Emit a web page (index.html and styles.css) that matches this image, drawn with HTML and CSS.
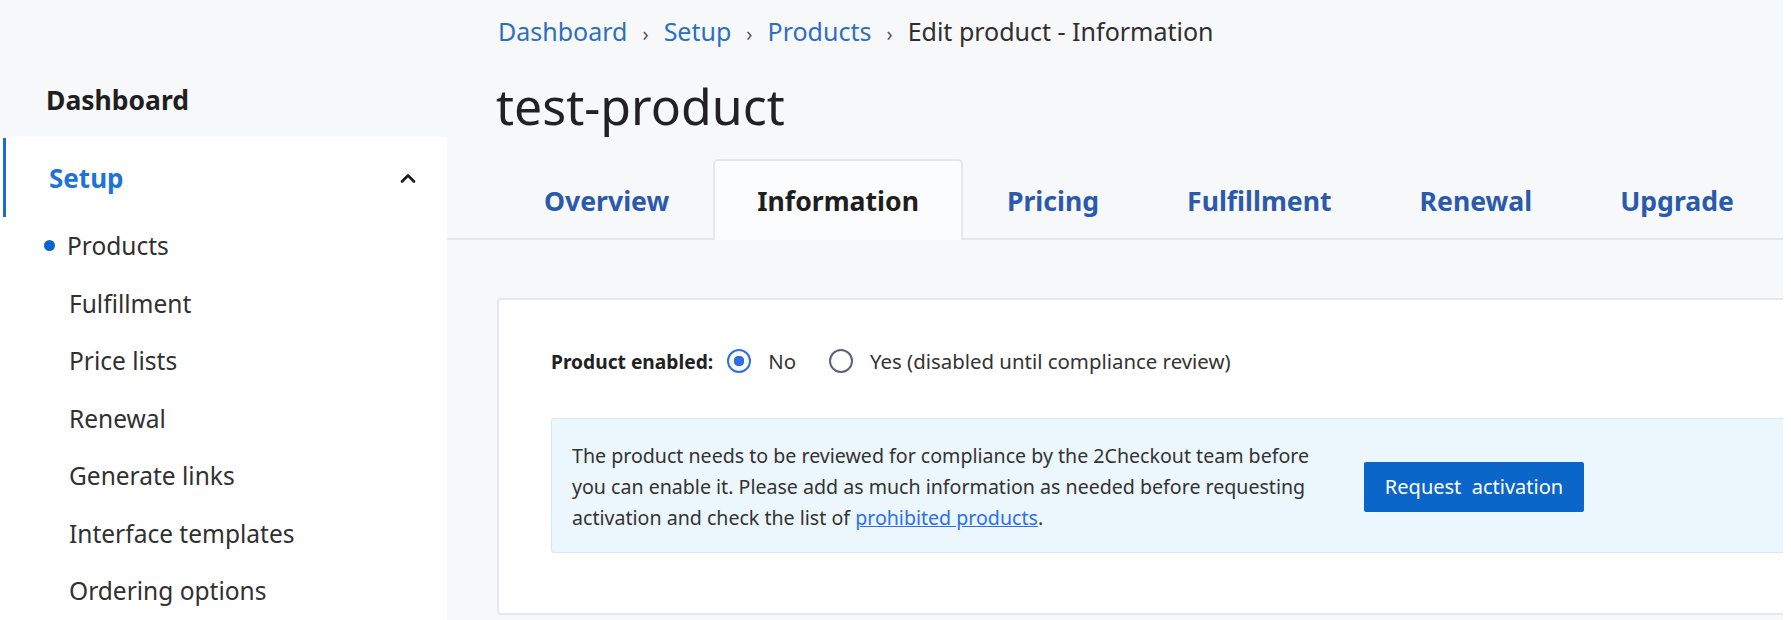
FILE: index.html
```html
<!DOCTYPE html>
<html lang="en">
<head>
<meta charset="utf-8">
<title>Edit product - Information</title>
<link rel="stylesheet" href="styles.css">
</head>
<body>
<div class="app">
  <aside class="sidebar">
    <div class="side-top"><span class="side-dash">Dashboard</span></div>
    <div class="side-panel">
      <div class="side-section">
        <span class="side-section-title">Setup</span>
        <svg class="chevron" width="16" height="10" viewBox="0 0 16 10"><polyline points="2,8.5 8,2.5 14,8.5" fill="none" stroke="#1b1b1b" stroke-width="2.6" stroke-linecap="round" stroke-linejoin="round"/></svg>
      </div>
      <ul class="side-list">
        <li class="side-item active"><span class="dot"></span>Products</li>
        <li class="side-item">Fulfillment</li>
        <li class="side-item">Price lists</li>
        <li class="side-item">Renewal</li>
        <li class="side-item">Generate links</li>
        <li class="side-item">Interface templates</li>
        <li class="side-item">Ordering options</li>
      </ul>
    </div>
  </aside>
  <main class="main">
    <nav class="crumbs">
      <a class="crumb-link">Dashboard</a><span class="sep">›</span><a class="crumb-link">Setup</a><span class="sep">›</span><a class="crumb-link">Products</a><span class="sep">›</span><span class="crumb-current">Edit product - Information</span>
    </nav>
    <h1 class="title">test-product</h1>
    <div class="tabs">
      <a class="tab">Overview</a>
      <a class="tab active">Information</a>
      <a class="tab">Pricing</a>
      <a class="tab">Fulfillment</a>
      <a class="tab">Renewal</a>
      <a class="tab">Upgrade</a>
    </div>
    <section class="card">
      <div class="field-row">
        <span class="field-label">Product enabled:</span>
        <label class="radio"><span class="radio-ring checked"></span>No</label>
        <label class="radio"><span class="radio-ring"></span>Yes (disabled until compliance review)</label>
      </div>
      <div class="notice">
        <p class="notice-text">The product needs to be reviewed for compliance by the 2Checkout team before you can enable it. Please add as much information as needed before requesting activation and check the list of <a class="notice-link">prohibited products</a>.</p>
        <button class="btn-primary">Request&nbsp; activation</button>
      </div>
    </section>
  </main>
  <div class="edge"></div>
</div>
</body>
</html>
```

FILE: styles.css
```css
* { box-sizing: border-box; }

html, body {
  margin: 0;
  padding: 0;
  height: 620px;
  overflow: hidden;
}

body {
  background: #f7f8fa;
  font-family: "Noto Sans", "Open Sans", sans-serif;
  color: #2b2b2b;
}

.app {
  display: flex;
  height: 620px;
}

/* Sidebar */
.sidebar {
  width: 447px;
  flex: 0 0 447px;
  display: flex;
  flex-direction: column;
}

.side-top {
  height: 137px;
  display: flex;
  align-items: flex-end;
  padding: 0 0 19px 46px;
}

.side-dash {
  font-size: 26.5px;
  font-weight: 700;
  line-height: 36px;
  color: #1f1f1f;
}

.side-panel {
  flex: 1;
  background: #ffffff;
  padding-top: 1px;
}

.side-section {
  display: flex;
  align-items: center;
  justify-content: space-between;
  height: 79px;
  margin-left: 3px;
  border-left: 3px solid #1b6fd1;
  padding: 0 31px 0 43px;
}

.side-section-title {
  font-size: 26px;
  font-weight: 700;
  color: #1f74d3;
}

.chevron { display: block; }

.side-list {
  list-style: none;
  margin: 0;
  padding: 0;
}

.side-item {
  height: 57.5px;
  display: flex;
  align-items: center;
  padding-left: 69px;
  font-size: 24.5px;
  color: #303030;
}

.side-item.active {
  padding-left: 44px;
}

.dot {
  width: 11px;
  height: 11px;
  border-radius: 50%;
  background: #0b63ce;
  margin-right: 12px;
}

/* Main */
.main {
  flex: 1;
  min-width: 0;
  overflow: hidden;
  display: flex;
  flex-direction: column;
}

.crumbs {
  padding: 14px 0 0 51px;
  font-size: 25px;
  line-height: 34px;
  white-space: nowrap;
}

.crumb-link { color: #2e6fbd; }

.crumb-current { color: #2f2f2f; }

.sep {
  display: inline-block;
  margin: 0 15px;
  color: #555;
  font-size: 20px;
}

.title {
  margin: 25px 0 0 49px;
  font-size: 50px;
  font-weight: 400;
  line-height: 60px;
  color: #222;
}

.tabs {
  display: flex;
  margin-top: 23px;
  padding-left: 53px;
  border-bottom: 2px solid #e5e7ea;
  height: 81px;
}

.tab {
  display: flex;
  align-items: center;
  padding: 0 42px 0;
  font-size: 26.6px;
  font-weight: 700;
  color: #2c5aab;
  border: 2px solid transparent;
  border-bottom: none;
  margin-bottom: -2px;
  white-space: nowrap;
}

.tab.active {
  color: #1e1e1e;
  background: #fbfcfd;
  border-color: #e5e7ea;
  border-radius: 5px 5px 0 0;
}

/* Card */
.card {
  margin: 58px 0 0 50px;
  width: 1500px;
  flex: 0 0 auto;
  background: #fff;
  border: 2px solid #e6e8eb;
  border-radius: 4px;
  padding: 46px 52px 60px;
}

.field-row {
  display: flex;
  align-items: center;
  height: 30px;
  font-size: 20.4px;
  color: #333;
}

.field-label {
  font-weight: 700;
  font-size: 19.2px;
  color: #222;
  margin-right: 14px;
}

.radio {
  display: flex;
  align-items: center;
  margin-right: 33px;
}

.radio-ring {
  width: 24px;
  height: 24px;
  border-radius: 50%;
  border: 2px solid #5b6478;
  margin-right: 17px;
  background: #fff;
}

.radio-ring.checked {
  border-color: #2f6fe4;
  background: radial-gradient(circle, #2f6fe4 0 5px, #fff 5.5px);
}

.notice {
  margin-top: 42px;
  display: flex;
  align-items: center;
  background: #ebf6fd;
  border: 1px solid #d9e6ef;
  border-radius: 3px;
  padding: 21px 20px 19px;
}

.notice-text {
  margin: 0;
  width: 740px;
  font-size: 19.6px;
  line-height: 31px;
  color: #333;
}

.notice-link {
  color: #2d6ff0;
  text-decoration: underline;
}

.btn-primary {
  margin-left: 52px;
  width: 220px;
  height: 50px;
  border: none;
  border-radius: 2px;
  background: #0a66c9;
  color: #fff;
  font-family: "Noto Sans", "Open Sans", sans-serif;
  font-size: 20px;
}

.edge {
  width: 8px;
  flex: 0 0 8px;
  background: #fff;
}
```
